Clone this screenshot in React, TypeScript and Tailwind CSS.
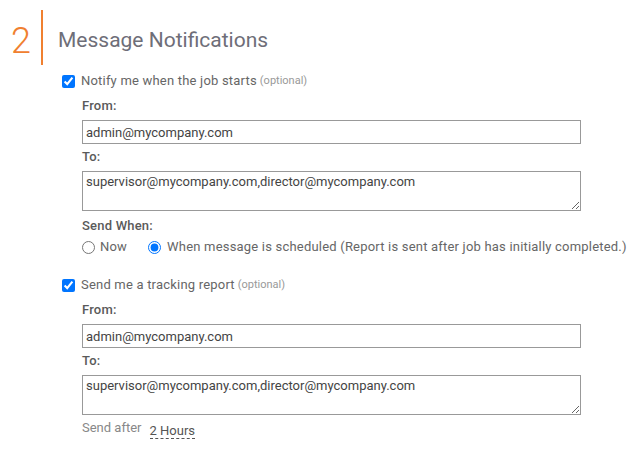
import { useState } from 'react';

const font = { fontFamily: 'Roboto, "Liberation Sans", sans-serif' };

function EmailBlock({ from, to }: { from: string; to: string }) {
  return (
    <div className="pl-[82px] pr-[62px]">
      <div className="mt-[7px] text-[13px] font-medium text-[#5a5a5a] leading-[16px] tracking-[0.2px]">From:</div>
      <input
        defaultValue={from}
        className="mt-[6px] block w-[499px] h-[24px] border border-[#999] px-[3px] text-[13px] text-[#444] outline-none"
      />
      <div className="mt-[5px] text-[13px] font-medium text-[#5a5a5a] leading-[16px] tracking-[0.2px]">To:</div>
      <textarea
        defaultValue={to}
        className="mt-[6px] block w-[499px] h-[40px] border border-[#999] px-[3px] pt-[2px] text-[13px] leading-[16px] text-[#444] outline-none"
      />
    </div>
  );
}

function Check({ label, checked, onChange }: { label: string; checked: boolean; onChange: (v: boolean) => void }) {
  return (
    <label className="flex items-center h-[20px] gap-[6px] pl-[62px]">
      <input type="checkbox" checked={checked} onChange={(e) => onChange(e.target.checked)} className="m-0 w-[13px] h-[13px]" />
      <span className="text-[13px] text-[#666] tracking-[0.2px]">{label}</span>
      <span className="text-[11px] text-[#999] -ml-[3px] mt-[1px]">(optional)</span>
    </label>
  );
}

export default function App() {
  const [when, setWhen] = useState('scheduled');
  const [notify, setNotify] = useState(true);
  const [track, setTrack] = useState(true);
  return (
    <div className="w-[643px] h-[450px] bg-white overflow-hidden" style={font}>
      <div className="flex items-stretch pt-[10px]">
        <div className="w-[41px] flex items-center justify-end pr-[10px]">
          <span className="text-[36px] leading-none text-[#f08030] font-light pt-[6px]">2</span>
        </div>
        <div className="w-[2px] h-[55px] bg-[#f08030]" />
        <div className="pl-[15px] pt-[17px] text-[21px] text-[#6e6e78] leading-[26px]">Message Notifications</div>
      </div>

      <div className="mt-[6px]">
        <Check label="Notify me when the job starts" checked={notify} onChange={setNotify} />
      </div>

      <EmailBlock from="admin@mycompany.com" to="supervisor@mycompany.com,director@mycompany.com" />

      <div className="pl-[82px] mt-[7px]">
        <div className="text-[13px] font-medium text-[#5a5a5a] leading-[16px] tracking-[0.2px]">Send When:</div>
        <div className="flex items-center h-[20px] mt-[3px] text-[13px] text-[#666] tracking-[0.2px]">
          <label className="flex items-center gap-[5px]">
            <input type="radio" name="when" checked={when === 'now'} onChange={() => setWhen('now')} className="m-0 w-[13px] h-[13px]" />
            Now
          </label>
          <label className="flex items-center gap-[6px] ml-[21px]">
            <input type="radio" name="when" checked={when === 'scheduled'} onChange={() => setWhen('scheduled')} className="m-0 w-[13px] h-[13px]" />
            When message is scheduled (Report is sent after job has initially completed.)
          </label>
        </div>
      </div>

      <div className="mt-[18px]">
        <Check label="Send me a tracking report" checked={track} onChange={setTrack} />
      </div>

      <EmailBlock from="admin@mycompany.com" to="supervisor@mycompany.com,director@mycompany.com" />

      <div className="pl-[82px] mt-[3px] h-[20px] flex items-center text-[13px]">
        <span className="text-[#888]">Send after</span>
        <span className="ml-[8px] text-[#555] border-b border-dashed border-[#555] leading-[15px] translate-y-[3px]">2 Hours</span>
      </div>
    </div>
  );
}
